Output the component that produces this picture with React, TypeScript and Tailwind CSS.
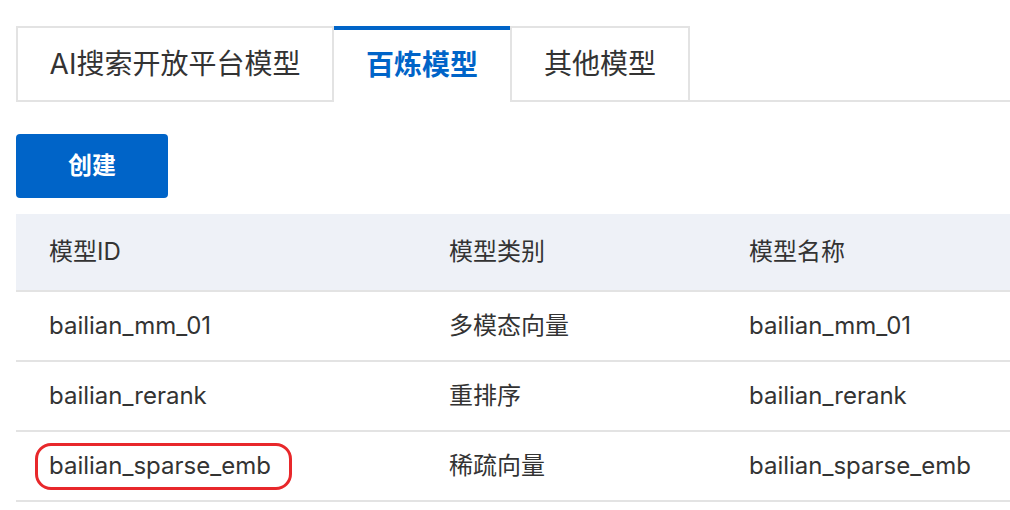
import React from "react";

const tabs = ["AI搜索开放平台模型", "百炼模型", "其他模型"];

const rows = [
  { id: "bailian_mm_01", type: "多模态向量", name: "bailian_mm_01" },
  { id: "bailian_rerank", type: "重排序", name: "bailian_rerank" },
  { id: "bailian_sparse_emb", type: "稀疏向量", name: "bailian_sparse_emb", marked: true },
];

export default function App() {
  const active = 1;

  return (
    <div
      className="h-[510px] w-[1010px] overflow-hidden bg-white pl-4 pt-[26px] text-[#333]"
      style={{ fontFamily: '"Inter", "Noto Sans CJK SC", sans-serif' }}
    >
      {/* Tabs */}
      <div className="flex h-[76px]">
        <div className="flex w-[318px] items-center justify-center border-2 border-[#e3e3e3] text-[28px]">
          {tabs[0]}
        </div>
        <div className="flex w-[176px] items-center justify-center border-t-4 border-[#0064c8] pb-[2px] text-[28px] font-bold text-[#0064c8]">
          {tabs[active]}
        </div>
        <div className="flex w-[180px] items-center justify-center border-2 border-[#e3e3e3] text-[28px]">
          {tabs[2]}
        </div>
        <div className="flex-1 border-b-2 border-[#e3e3e3]" />
      </div>

      {/* Create button */}
      <button className="mt-8 flex h-16 w-[152px] items-center justify-center rounded-[4px] bg-[#0064c8] text-[24px] font-bold text-white">
        创建
      </button>

      {/* Table */}
      <div className="mt-4 text-[24px]">
        <div className="flex h-[78px] items-center border-b-2 border-[#e3e3e3] bg-[#eef1f7] pl-[33px]">
          <div className="w-[400px]">模型ID</div>
          <div className="w-[300px]">模型类别</div>
          <div className="flex-1">模型名称</div>
        </div>
        {rows.map((r) => (
          <div key={r.id} className="flex h-[70px] items-center border-b-2 border-[#e3e3e3] pl-[33px]">
            <div className="w-[400px]">
              <span className="relative inline-block leading-[24px]">
                {r.id}
                {r.marked && (
                  <span className="absolute -bottom-[12px] -left-[14px] -right-[21px] -top-[11px] rounded-[16px] border-[3px] border-[#e8282b]" />
                )}
              </span>
            </div>
            <div className="w-[300px]">{r.type}</div>
            <div className="flex-1">{r.name}</div>
          </div>
        ))}
      </div>
    </div>
  );
}
